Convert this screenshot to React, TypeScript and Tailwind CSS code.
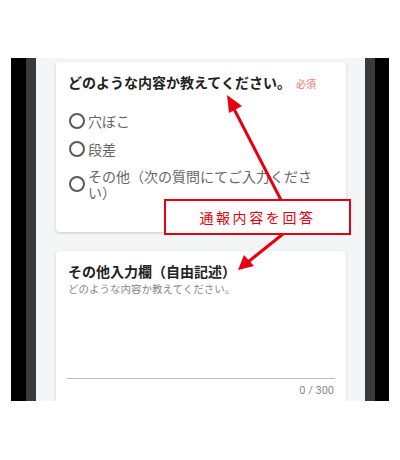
import React from 'react';

const options = ['穴ぼこ', '段差', 'その他（次の質問にてご入力ください）'];

function Radio({ label }: { label: string }) {
  return (
    <label className="flex items-center">
      <span className="w-[16px] h-[16px] shrink-0 rounded-full border-2 border-[#5a5a5a]" />
      <span className="ml-[3px] w-[230px] text-[14px] leading-[16px] text-[#666]">{label}</span>
    </label>
  );
}

export default function App() {
  return (
    <div
      className="relative w-[400px] h-[460px] bg-white pt-[58px] px-[11px]"
      style={{ fontFamily: '"Noto Sans CJK JP", "Noto Sans", sans-serif' }}
    >
      {/* phone screenshot */}
      <div className="flex h-[343px] overflow-hidden">
        <div className="w-[15px] bg-black" />
        <div className="w-[10px] bg-[#3a3a3a]" />
        <div className="flex-1 bg-[#f4f5f7] pl-[20px] pr-[19px] pt-[4px]">
          {/* question card */}
          <div className="bg-white rounded-[4px] shadow-[0_1px_3px_rgba(0,0,0,0.18)] px-[12px] pt-[10px] pb-[32px]">
            <div className="flex items-baseline">
              <span className="text-[14px] leading-[20px] font-bold text-[#222]">どのような内容か教えてください。</span>
              <span className="ml-[5px] text-[10px] text-[#f87171]">必須</span>
            </div>
            <div className="mt-[15px] pl-[1px]">
              <div className="h-[28px] flex items-center">
                <Radio label={options[0]} />
              </div>
              <div className="h-[28px] flex items-center">
                <Radio label={options[1]} />
              </div>
              <div className="mt-[5px]">
                <Radio label={options[2]} />
              </div>
            </div>
          </div>

          {/* free text card */}
          <div className="mt-[19px] bg-white rounded-[4px] shadow-[0_1px_3px_rgba(0,0,0,0.18)] px-[12px] pt-[10px] h-[200px]">
            <div className="text-[14px] leading-[20px] font-bold text-[#222]">その他入力欄（自由記述）</div>
            <div className="text-[10.5px] leading-[16px] text-[#888]">どのような内容か教えてください。</div>
            <div className="mt-[81px] -mx-[1px] border-b border-[#bbb]" />
            <div className="mt-[5px] text-right text-[11px] leading-[14px] text-[#888]" style={{ fontFamily: 'Roboto, sans-serif' }}>
              0 / 300
            </div>
          </div>
        </div>
        <div className="w-[10px] bg-[#3a3a3a]" />
        <div className="w-[14px] bg-black" />
      </div>

      {/* annotation arrows */}
      <svg className="absolute inset-0 pointer-events-none" width="400" height="460" viewBox="0 0 400 460">
        <line x1="281" y1="200" x2="233" y2="107" stroke="#e60012" strokeWidth="3" />
        <polygon points="227,95 242,106 229,113" fill="#e60012" />
        <line x1="283" y1="234" x2="248" y2="262" stroke="#e60012" strokeWidth="3" />
        <polygon points="238,270 244,255 254,266" fill="#e60012" />
      </svg>

      {/* callout */}
      <div className="absolute left-[164px] top-[199px] w-[187px] h-[36px] border-2 border-[#e60012] bg-white flex items-center justify-center">
        <span className="text-[14px] tracking-[2.6px] text-[#e60012]">通報内容を回答</span>
      </div>
    </div>
  );
}
